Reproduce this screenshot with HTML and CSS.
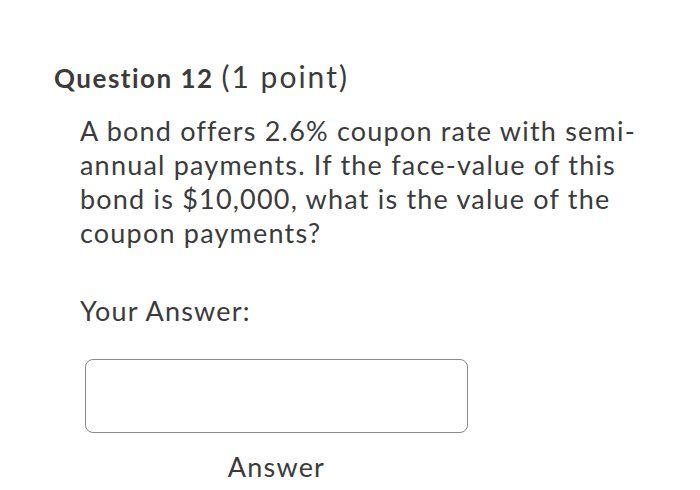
FILE: index.html
```html
<!DOCTYPE html>
<html>
<head>
<meta charset="utf-8">
<link rel="stylesheet" href="styles.css">
</head>
<body>
<div class="question">
  <h2 class="title"><span class="qnum">Question 12</span> <span class="points">(1 point)</span></h2>
  <div class="content">
    <p class="prompt">A bond offers 2.6% coupon rate with semi-annual payments. If the face-value of this bond is $10,000, what is the value of the coupon payments?</p>
    <p class="label">Your Answer:</p>
    <div class="answer">
      <div class="box"></div>
      <div class="caption">Answer</div>
    </div>
  </div>
</div>
</body>
</html>
```

FILE: styles.css
```css
html, body {
  margin: 0;
  padding: 0;
  background: #ffffff;
}
body {
  font-family: Lato, "Liberation Sans", sans-serif;
  color: #3b3b3b;
}
.question {
  padding: 58px 0 0 54px;
}
.title {
  margin: 0;
  font-size: 26px;
  line-height: 36px;
  font-weight: 700;
  letter-spacing: 1.5px;
}
.points {
  font-weight: 400;
  font-size: 30px;
  letter-spacing: 2px;
}
.content {
  padding-left: 26px;
  width: 565px;
}
.prompt {
  margin: 18px 0 0 0;
  font-size: 27px;
  line-height: 34px;
  letter-spacing: 1.2px;
}
.label {
  margin: 44px 0 0 0;
  font-size: 27px;
  line-height: 34px;
  letter-spacing: 1.2px;
}
.answer {
  width: 383px;
  margin: 31px 0 0 5px;
  display: flex;
  flex-direction: column;
  align-items: center;
}
.box {
  align-self: stretch;
  height: 72px;
  border: 1.5px solid #8a8a8a;
  border-radius: 8px;
}
.caption {
  margin-top: 17px;
  font-size: 27px;
  line-height: 34px;
  letter-spacing: 1.2px;
}
```
